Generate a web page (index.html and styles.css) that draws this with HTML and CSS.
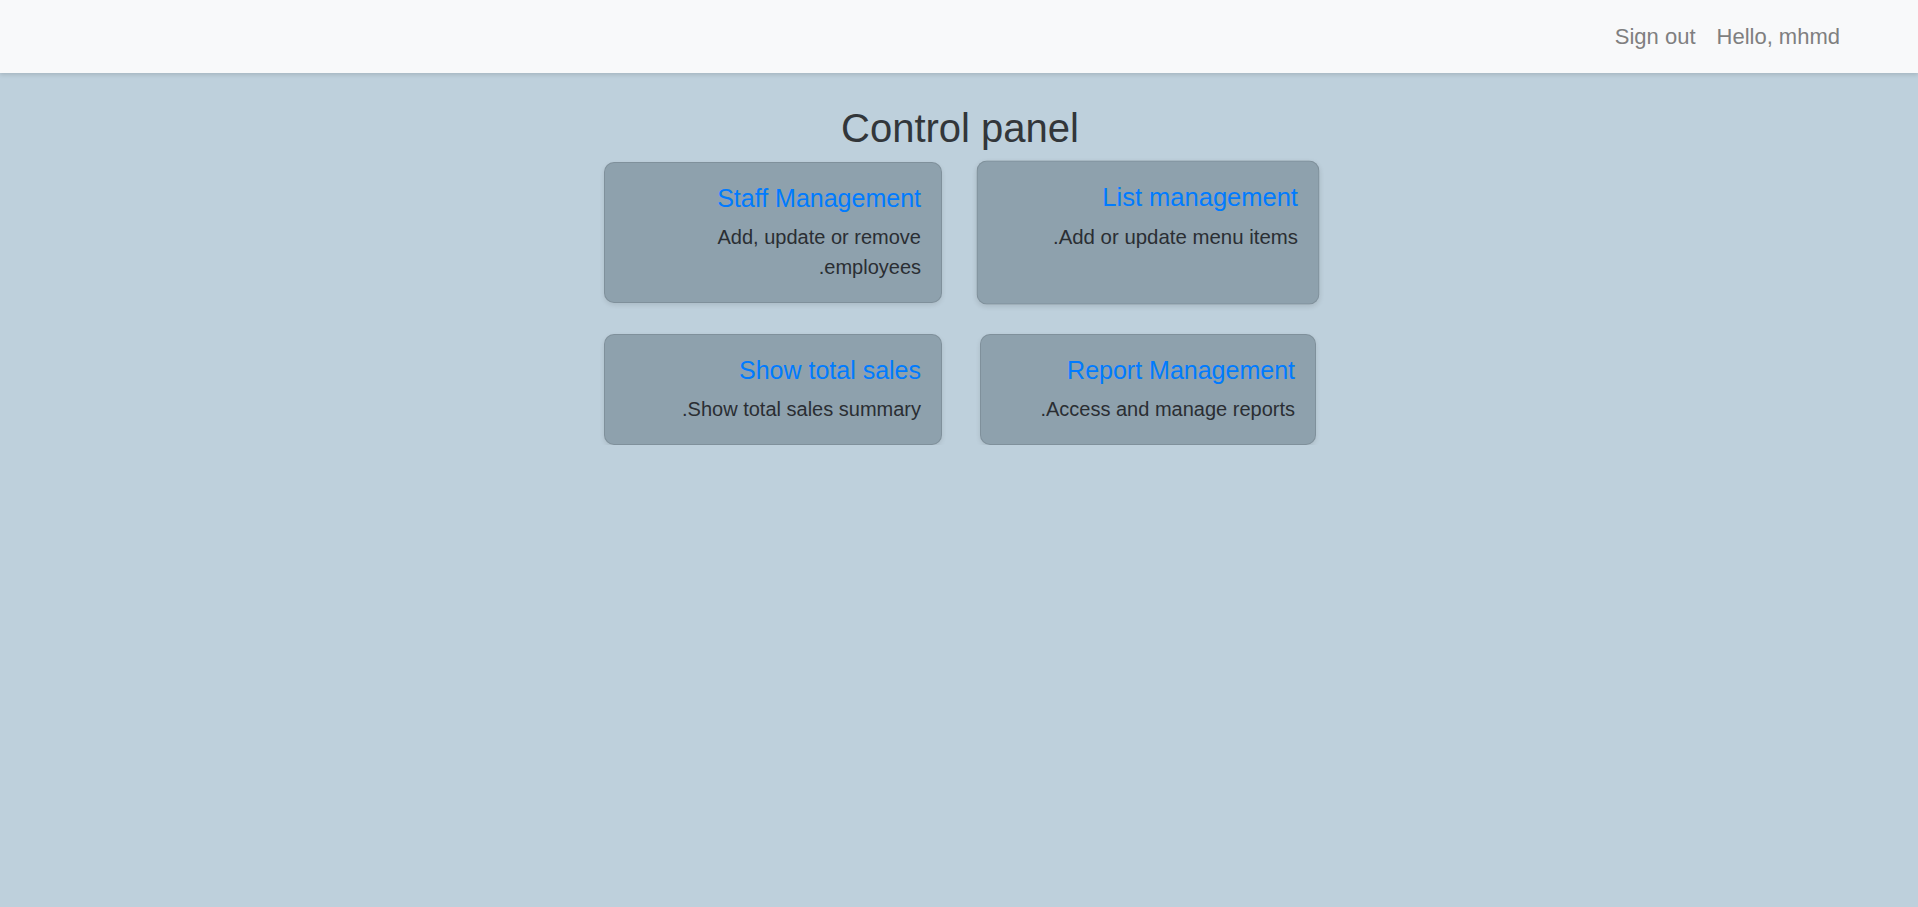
FILE: index.html
```html
<!DOCTYPE html>
<html lang="en">
<head>
<meta charset="utf-8">
<title>Control panel</title>
<link rel="stylesheet" href="styles.css">
</head>
<body>
<nav class="navbar">
  <ul class="nav-links">
    <li><a class="nav-link" href="#">Sign out</a></li>
    <li><span class="nav-link">Hello, mhmd</span></li>
  </ul>
</nav>
<main class="main">
  <h1 class="page-title">Control panel</h1>
  <div class="cards">
    <a class="card" href="#">
      <h5 class="card-title">Staff Management</h5>
      <p class="card-text">Add, update or remove employees.</p>
    </a>
    <a class="card card-hover" href="#">
      <h5 class="card-title">List management</h5>
      <p class="card-text">Add or update menu items.</p>
    </a>
    <a class="card" href="#">
      <h5 class="card-title">Show total sales</h5>
      <p class="card-text">Show total sales summary.</p>
    </a>
    <a class="card" href="#">
      <h5 class="card-title">Report Management</h5>
      <p class="card-text">Access and manage reports.</p>
    </a>
  </div>
</main>
</body>
</html>
```
FILE: styles.css
```css
* { box-sizing: border-box; }
html, body { margin: 0; padding: 0; }
html { background: #bed0dc; }
body {
  font-family: "Liberation Sans", Arial, sans-serif;
  background: #bed0dc;
  color: #212529;
}
.navbar {
  height: 73px;
  background: #f8f9fa;
  display: flex;
  align-items: center;
  justify-content: flex-end;
  padding-right: 78px;
  padding-top: 2px;
  box-shadow: 0 2px 4px rgba(0, 0, 0, 0.12);
  position: relative;
  z-index: 1;
}
.nav-links {
  list-style: none;
  margin: 0;
  padding: 0;
  display: flex;
  gap: 21px;
}
.nav-link {
  font-size: 22px;
  line-height: 1.2;
  color: #7f7f80;
  text-decoration: none;
}
.main {
  display: flex;
  flex-direction: column;
  align-items: center;
  padding-top: 31px;
  padding-left: 2px;
}
.page-title {
  font-size: 40px;
  font-weight: 400;
  line-height: 1.2;
  margin: 0 0 10px;
  color: #32363a;
}
.cards {
  display: grid;
  grid-template-columns: 338px 336px;
  column-gap: 38px;
  row-gap: 31px;
}
.card {
  display: block;
  direction: rtl;
  background: #8ea1ad;
  border: 1px solid rgba(0, 0, 0, 0.1);
  border-radius: 10px;
  padding: 20px;
  text-decoration: none;
  box-shadow: 0 2px 5px rgba(0, 0, 0, 0.1);
}
.card-hover {
  transform: scale(1.02);
}
.card-title {
  font-size: 25px;
  font-weight: 400;
  line-height: 1.2;
  margin: 0 0 9px;
  color: #007bff;
}
.card-text {
  font-size: 20px;
  line-height: 1.5;
  margin: 0;
  color: #2a2e33;
}
```
